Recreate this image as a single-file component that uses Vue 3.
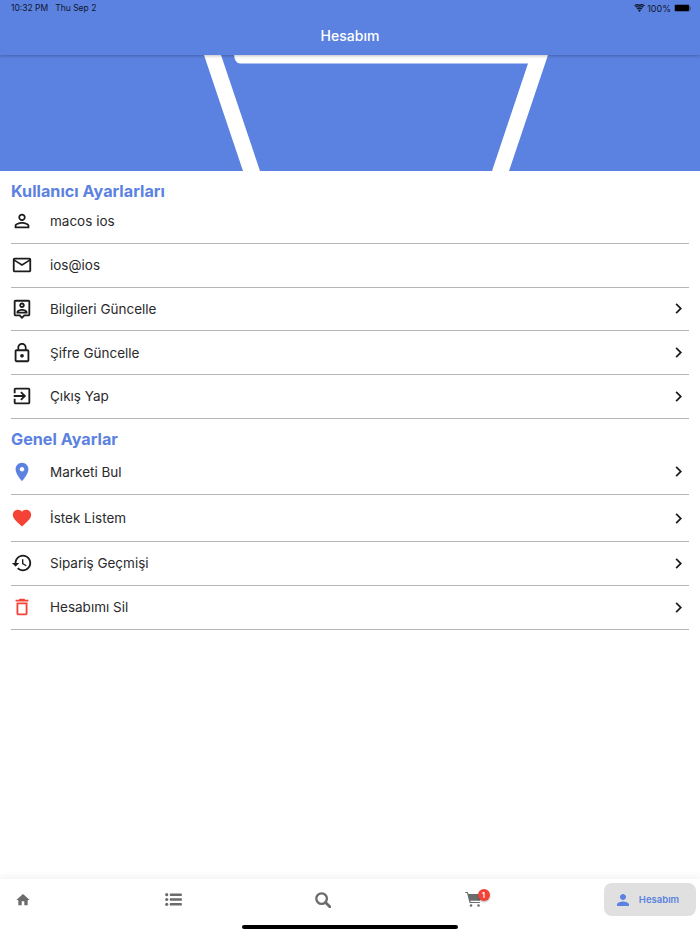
<template>
  <div class="page">
    <header class="topbar">
      <div class="status">
        <span class="clock">10:32 PM</span>
        <span class="date">Thu Sep 2</span>
        <span class="spacer"></span>
        <svg class="wifi" viewBox="0 0 24 18" width="11" height="8">
          <path d="M12 18l3.400-4.200a5.400 5.400 0 0 0-6.800 0zM5.600 10.100l2 2.400a7 7 0 0 1 8.800 0l2-2.400a10.200 10.200 0 0 0-12.800 0zM2.500 6.300l2 2.400a12 12 0 0 1 15 0l2-2.400a15.200 15.200 0 0 0-19 0zM0 3.200 1.600 5.200a17.400 17.400 0 0 1 20.800 0L24 3.200a20.600 20.600 0 0 0-24 0z" fill="#10162c" />
        </svg>
        <span class="battery-text">100%</span>
        <span class="battery"><i></i></span>
        <span class="nib"></span>
      </div>
      <div class="title">Hesabım</div>
    </header>

    <div class="hero">
      <svg viewBox="0 0 700 116" width="700" height="116">
        <path d="M204 0h17l39 116h-17z" fill="#fff" />
        <path d="M234 0h314l-39 116h-17l36-107.500H240q-5 0-6-8.500z" fill="#fff" />
      </svg>
    </div>

    <main class="content">
      <section v-for="group in groups" :key="group.title" class="group">
        <h2>{{ group.title }}</h2>
        <div v-for="item in group.items" :key="item.label" class="row" :class="item.size">
          <span class="row-icon">
            <svg viewBox="0 0 24 24" width="22" height="22">
              <path :d="item.icon" :fill="item.color || '#1c1c1e'" />
            </svg>
          </span>
          <span class="label">{{ item.label }}</span>
          <svg v-if="item.arrow" class="chevron" viewBox="0 0 24 24" width="21" height="21">
            <path d="M10 6L8.590 7.410 13.170 12l-4.580 4.590L10 18l6-6z" fill="#1c1c1e" />
          </svg>
        </div>
      </section>
    </main>

    <nav class="tabs">
      <span class="tab">
        <svg viewBox="0 0 24 24" width="16" height="16"><path d="M10 20v-6h4v6h5v-8h3L12 3 2 12h3v8z" fill="#6b6b6b" /></svg>
      </span>
      <span class="tab">
        <svg viewBox="0 0 18 14" width="17" height="13" fill="#6b6b6b">
          <circle cx="1.700" cy="1.800" r="1.700" />
          <circle cx="1.700" cy="7" r="1.700" />
          <circle cx="1.700" cy="12.200" r="1.700" />
          <rect x="5" y="0.500" width="13" height="2.600" rx="0.600" />
          <rect x="5" y="5.700" width="13" height="2.600" rx="0.600" />
          <rect x="5" y="10.900" width="13" height="2.600" rx="0.600" />
        </svg>
      </span>
      <span class="tab">
        <svg viewBox="0 0 16 16" width="16" height="16" fill="none" stroke="#6b6b6b">
          <circle cx="6.600" cy="6.600" r="5.300" stroke-width="2.300" />
          <path d="M10.600 10.600l4.200 4.200" stroke-width="2.800" stroke-linecap="round" />
        </svg>
      </span>
      <span class="tab cart">
        <svg viewBox="0 0 20 18" width="17" height="15" fill="#6b6b6b">
          <path d="M0 0h3.200l.7 2.400H20l-2.300 8.200H6.200l.4 1.400h11v1.300H5.300L2.200 1.300H0z" />
          <circle cx="7" cy="16.300" r="1.500" />
          <circle cx="16" cy="16.300" r="1.500" />
        </svg>
        <b class="badge">1</b>
      </span>
      <span class="tab active">
        <svg viewBox="0 0 24 24" width="18" height="18"><path d="M12 12c2.210 0 4-1.790 4-4s-1.790-4-4-4-4 1.790-4 4 1.790 4 4 4zm0 2c-2.670 0-8 1.340-8 4v2h16v-2c0-2.660-5.330-4-8-4z" fill="#5b82e0" /></svg>
        <span>Hesabım</span>
      </span>
      <span class="home-bar"></span>
    </nav>
  </div>
</template>

<script setup>
const groups = [
  {
    title: 'Kullanıcı Ayarlarları',
    items: [
      { label: 'macos ios', icon: 'M12 5.900a2.100 2.100 0 1 1 0 4.200 2.100 2.100 0 0 1 0-4.200m0 9c2.970 0 6.100 1.460 6.100 2.100v1.100H5.900V17c0-.640 3.130-2.100 6.100-2.100M12 4C9.790 4 8 5.790 8 8s1.790 4 4 4 4-1.790 4-4-1.790-4-4-4zm0 9c-2.670 0-8 1.340-8 4v3h16v-3c0-2.660-5.330-4-8-4z' },
      { label: 'ios@ios', icon: 'M22 6c0-1.100-.900-2-2-2H4c-1.100 0-2 .900-2 2v12c0 1.100.900 2 2 2h16c1.100 0 2-.900 2-2V6zm-2 0l-8 5-8-5h16zm0 12H4V8l8 5 8-5v10z' },
      { label: 'Bilgileri Güncelle', arrow: true, icon: 'M19 2H5c-1.110 0-2 .900-2 2v14c0 1.100.890 2 2 2h4l3 3 3-3h4c1.100 0 2-.900 2-2V4c0-1.100-.900-2-2-2zm0 16h-4.830l-.590.590L12 20.170l-1.590-1.590-.580-.580H5V4h14v14zm-7-7c1.650 0 3-1.350 3-3s-1.350-3-3-3-3 1.350-3 3 1.350 3 3 3zm0-4c.550 0 1 .450 1 1s-.450 1-1 1-1-.450-1-1 .450-1 1-1zm6 8.580c0-2.500-3.970-3.580-6-3.580s-6 1.080-6 3.580V17h12v-1.420zM8.480 15c.740-.510 2.230-1 3.520-1s2.780.490 3.520 1H8.480z' },
      { label: 'Şifre Güncelle', arrow: true, icon: 'M12 17c1.100 0 2-.900 2-2s-.900-2-2-2-2 .900-2 2 .900 2 2 2zm6-9h-1V6c0-2.760-2.240-5-5-5S7 3.240 7 6v2H6c-1.100 0-2 .900-2 2v10c0 1.100.900 2 2 2h12c1.100 0 2-.900 2-2V10c0-1.100-.900-2-2-2zM8.900 6c0-1.710 1.390-3.100 3.100-3.100s3.100 1.390 3.100 3.100v2H8.900V6zM18 20H6V10h12v10z' },
      { label: 'Çıkış Yap', arrow: true, icon: 'M10.090 15.590L11.500 17l5-5-5-5-1.410 1.410L12.670 11H3v2h9.670l-2.580 2.590zM19 3H5c-1.110 0-2 .900-2 2v4h2V5h14v14H5v-4H3v4c0 1.100.890 2 2 2h14c1.100 0 2-.900 2-2V5c0-1.100-.900-2-2-2z' }
    ]
  },
  {
    title: 'Genel Ayarlar',
    items: [
      { label: 'Marketi Bul', arrow: true, size: 'first', color: '#5b82e0', icon: 'M12 2C8.130 2 5 5.130 5 9c0 5.250 7 13 7 13s7-7.750 7-13c0-3.870-3.130-7-7-7zm0 9.500c-1.380 0-2.500-1.120-2.500-2.500s1.120-2.500 2.500-2.500 2.500 1.120 2.500 2.500-1.120 2.500-2.500 2.500z' },
      { label: 'İstek Listem', arrow: true, size: 'tall', color: '#f44336', icon: 'M12 21.350l-1.450-1.320C5.400 15.360 2 12.280 2 8.500 2 5.420 4.420 3 7.500 3c1.740 0 3.410.810 4.500 2.090C13.090 3.810 14.760 3 16.500 3 19.580 3 22 5.420 22 8.500c0 3.780-3.400 6.860-8.550 11.540L12 21.350z' },
      { label: 'Sipariş Geçmişi', arrow: true, size: 'even', icon: 'M13 3c-4.970 0-9 4.030-9 9H1l3.890 3.890.070.140L9 12H6c0-3.870 3.130-7 7-7s7 3.130 7 7-3.130 7-7 7c-1.930 0-3.680-.790-4.940-2.060l-1.420 1.420C8.270 19.990 10.510 21 13 21c4.970 0 9-4.030 9-9s-4.030-9-9-9zm-1 5v5l4.280 2.540.720-1.210-3.500-2.080V8H12z' },
      { label: 'Hesabımı Sil', arrow: true, size: 'even', color: '#f44336', icon: 'M6 19c0 1.100.900 2 2 2h8c1.100 0 2-.900 2-2V7H6v12zM8 9h8v10H8V9zm7.500-5l-1-1h-5l-1 1H5v2h14V4z' }
    ]
  }
]
</script>

<style>
body {
  background: #fff;
}
</style>

<style scoped>
.page {
  width: 700px;
  height: 934px;
  display: flex;
  flex-direction: column;
  overflow: hidden;
  font-family: Inter, "Liberation Sans", sans-serif;
  color: #1c1c1e;
}

.topbar {
  position: relative;
  z-index: 2;
  height: 55px;
  flex: none;
  background: #5b82e0;
  box-shadow: 0 1px 3px rgba(0, 0, 0, 0.25);
}

.status {
  height: 16px;
  display: flex;
  align-items: center;
  padding: 0 9px 0 11px;
  font-size: 8.500px;
  color: #10162c;
}

.date {
  margin-left: 7px;
}

.spacer {
  flex: 1;
}

.battery-text {
  margin-left: 2px;
  margin-right: 3px;
  font-size: 9px;
}

.battery {
  width: 16px;
  height: 8px;
  padding: 1px;
  box-sizing: border-box;
  border-radius: 2px;
  background: rgba(16, 22, 44, 0.3);
}

.battery i {
  display: block;
  height: 100%;
  border-radius: 1px;
  background: #000;
}

.nib {
  width: 1px;
  height: 3px;
  background: rgba(16, 22, 44, 0.4);
}

.title {
  height: 39px;
  display: flex;
  align-items: center;
  justify-content: center;
  color: #fff;
  font-size: 14px;
  font-weight: 500;
}

.hero {
  height: 116px;
  flex: none;
  background: #5b82e0;
}

.hero svg {
  display: block;
}

.content {
  flex: 1;
  padding: 0 11px;
}

.group h2 {
  margin: 0;
  padding-top: 10px;
  height: 19px;
  line-height: 20px;
  font-size: 16.200px;
  font-weight: 700;
  color: #5b82e0;
}

.group + .group h2 {
  height: 21px;
}

.row {
  height: 43.750px;
  box-sizing: border-box;
  display: flex;
  align-items: center;
  border-bottom: 1px solid #b5b5b5;
}

.row.first {
  height: 45px;
}

.row.tall {
  height: 47px;
  padding-top: 1px;
}

.row.even {
  height: 44px;
}

.row-icon {
  width: 39px;
  display: flex;
  flex: none;
}

.label {
  flex: 1;
  font-size: 13.500px;
  color: #2a2a2c;
}

.tabs {
  position: relative;
  height: 55px;
  flex: none;
  display: flex;
  justify-content: space-between;
  align-items: flex-start;
  padding: 4px 4px 0;
  box-sizing: border-box;
  background: #fff;
  box-shadow: 0 -1px 8px rgba(0, 0, 0, 0.07);
}

.tab {
  position: relative;
  width: 38px;
  height: 33px;
  display: flex;
  align-items: center;
  justify-content: center;
}

.tab.active {
  width: 92px;
  gap: 7px;
  box-sizing: border-box;
  padding-right: 7px;
  border-radius: 8px;
  background: #e0e0e0;
  color: #5b82e0;
  font-size: 9.500px;
  font-weight: 600;
}

.badge {
  position: absolute;
  top: 6px;
  right: 2.500px;
  width: 12px;
  height: 12px;
  border-radius: 50%;
  background: #f44336;
  color: #fff;
  font-size: 8px;
  font-weight: 600;
  line-height: 12px;
  text-align: center;
  box-shadow: 0 1px 2px rgba(0, 0, 0, 0.3);
}

.home-bar {
  position: absolute;
  left: 242px;
  bottom: 5px;
  width: 216px;
  height: 4px;
  border-radius: 2px;
  background: #000;
}
</style>
